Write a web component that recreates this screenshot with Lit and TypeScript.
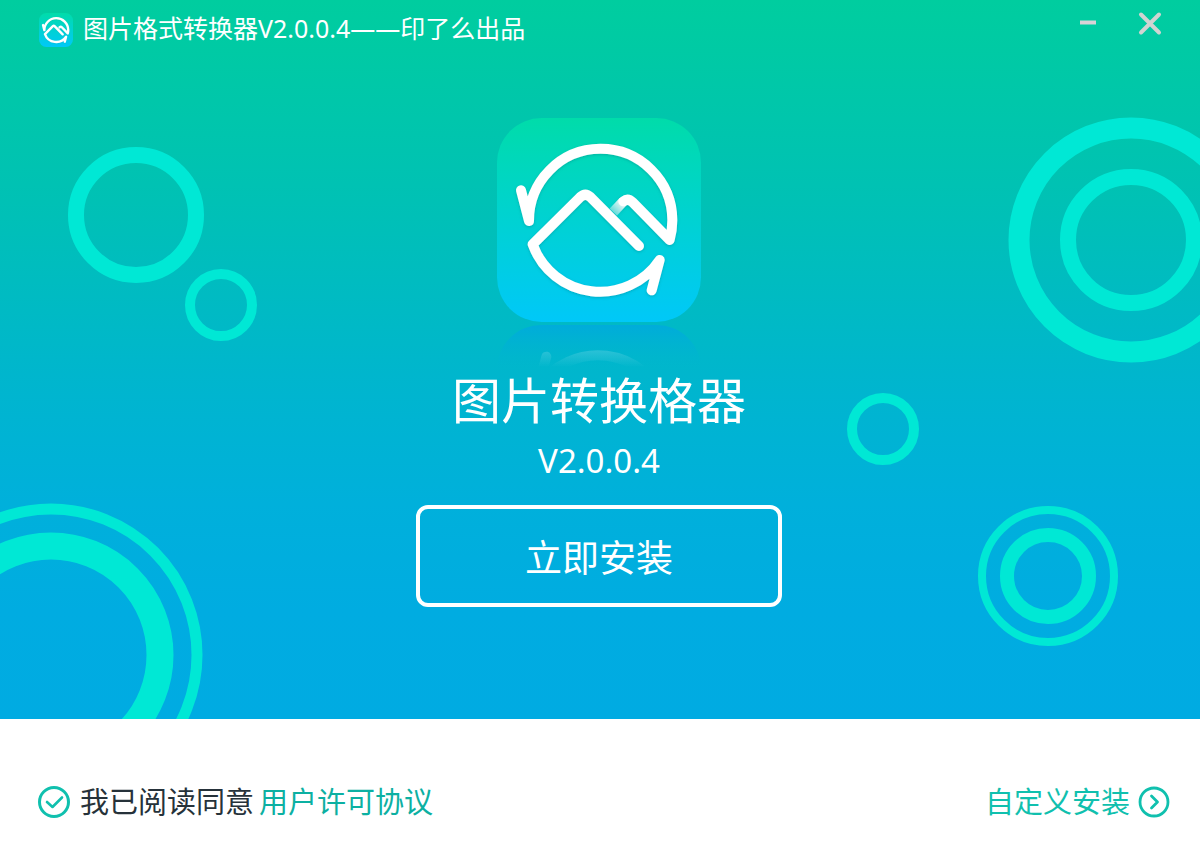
import { LitElement, css, html, svg } from "lit";
import { customElement, property, state } from "lit/decorators.js";

const LOGO_STROKES = svg`
  <path d="M430 304 L400 336" stroke="url(#fold)" stroke-linecap="butt"/>
  <path d="M123 271 L147 363 A215 215 0 0 1 577 360 Q577 392 569 420 L458 307 Q444 293 430 304"/>
  <path d="M477 438 L331 291 Q316 277 301 291 L158 433 A215 215 0 0 0 539 480 L515 571"/>
`;

@customElement("app-logo")
export class AppLogo extends LitElement {
  // Line weight in logo units; the small badge needs a heavier line.
  @property({ type: Number }) weight = 30;

  static styles = css`
    :host { display: block; }
    .mark { display: block; width: 100%; height: auto; }
  `;

  render() {
    return html`
      <svg class="mark" viewBox="51 54 612 612" aria-hidden="true">
        <defs>
          <linearGradient id="tile" x1="0" y1="0" x2="0" y2="1">
            <stop offset="0" stop-color="#00dcaa"/>
            <stop offset="0.5" stop-color="#00d2d2"/>
            <stop offset="1" stop-color="#00c8f8"/>
          </linearGradient>
          <linearGradient id="fold" gradientUnits="userSpaceOnUse" x1="432" y1="302" x2="398" y2="338">
            <stop offset="0" stop-color="#fff"/>
            <stop offset="1" stop-color="#fff" stop-opacity="0.3"/>
          </linearGradient>
          <filter id="shade" x="-10%" y="-10%" width="120%" height="120%">
            <feDropShadow dx="0" dy="3" stdDeviation="4" flood-color="#007a80" flood-opacity="0.4"/>
          </filter>
        </defs>
        <rect x="51" y="54" width="612" height="612" rx="134" fill="url(#tile)"/>
        <g fill="none" stroke="#fff" stroke-width=${this.weight} stroke-linecap="round"
           stroke-linejoin="round" filter="url(#shade)">${LOGO_STROKES}</g>
      </svg>
    `;
  }
}

@customElement("logo-reflection")
export class LogoReflection extends LitElement {
  static styles = css`
    :host { display: block; overflow: hidden; }
    .mark { display: block; width: 100%; height: auto; }
  `;

  render() {
    return html`
      <svg class="mark" viewBox="51 54 612 132" aria-hidden="true">
        <defs>
          <linearGradient id="fade" x1="0" y1="0" x2="0" y2="1">
            <stop offset="0" stop-color="#00a8e0" stop-opacity="0.8"/>
            <stop offset="1" stop-color="#00b4d2" stop-opacity="0"/>
          </linearGradient>
          <linearGradient id="line" gradientUnits="userSpaceOnUse" x1="0" y1="120" x2="0" y2="180">
            <stop offset="0" stop-color="#fff" stop-opacity="0.2"/>
            <stop offset="1" stop-color="#fff" stop-opacity="0"/>
          </linearGradient>
        </defs>
        <path d="M51 186 A134 132 0 0 1 185 54 H529 A134 132 0 0 1 663 186 Z" fill="url(#fade)"/>
        <g fill="none" stroke="url(#line)" stroke-width="30" stroke-linecap="round">
          <path d="M199 149 L175 240"/>
          <path d="M175 240 A215 215 0 0 1 556 287"/>
        </g>
      </svg>
    `;
  }
}

@customElement("app-root")
export class AppRoot extends LitElement {
  @state() private agreed = true;

  static styles = css`
    :host {
      display: flex;
      flex-direction: column;
      min-height: 100vh;
      background: #fff;
      font-family: "Noto Sans", "Noto Sans CJK SC", sans-serif;
    }
    button { border: 0; padding: 0; background: none; color: inherit; font: inherit; cursor: pointer; }
    .hero {
      position: relative;
      flex: 1;
      display: flex;
      flex-direction: column;
      overflow: hidden;
      color: #fff;
      background: linear-gradient(#00cd9f 0%, #00c1b5 28%, #00b6cd 52%, #00b0db 70%, #00ace1 85%, #00abe2 100%);
    }
    .rings { position: absolute; inset: 0; width: 100%; height: 100%; }
    .titlebar {
      position: relative;
      display: flex;
      align-items: center;
      justify-content: space-between;
      height: 60px;
      padding: 0 36px 0 39px;
    }
    .brand { display: flex; align-items: center; gap: 10px; }
    .badge { width: 34px; }
    .caption { margin: 0; padding-bottom: 4px; font-size: 25px; line-height: 36px; white-space: nowrap; }
    .controls { display: flex; gap: 34px; align-self: flex-start; padding-top: 10px; }
    .control { width: 28px; height: 28px; }
    .glyph { display: block; }
    .main {
      position: relative;
      flex: 1;
      display: flex;
      flex-direction: column;
      align-items: center;
      padding: 58px 26px 104px 24px;
    }
    .logo { width: 204px; }
    .reflection { width: 204px; margin-top: 3px; }
    .name { margin: 0; font-size: 49px; line-height: 62px; font-weight: 400; }
    .version { margin: 6px 0 0; font-size: 33px; line-height: 48px; }
    .install {
      box-sizing: border-box;
      width: 366px;
      max-width: 100%;
      height: 102px;
      margin-top: 20px;
      border: 4px solid #fff;
      border-radius: 12px;
      font-size: 37px;
    }
    .footer {
      display: flex;
      align-items: center;
      justify-content: space-between;
      height: 133px;
      padding: 32px 30px 0 38px;
      box-sizing: border-box;
      font-size: 29px;
      line-height: 40px;
      white-space: nowrap;
    }
    .terms { display: flex; align-items: center; gap: 5px; }
    .agree { display: flex; align-items: center; gap: 10px; color: #26323a; cursor: pointer; }
    .tick { display: grid; width: 32px; height: 32px; }
    .box {
      grid-area: 1 / 1;
      appearance: none;
      box-sizing: border-box;
      width: 32px;
      height: 32px;
      margin: 0;
      border: 3px solid #10c0ae;
      border-radius: 50%;
      cursor: pointer;
    }
    .check { grid-area: 1 / 1; pointer-events: none; visibility: hidden; }
    .box:checked + .check { visibility: visible; }
    .link { color: #0cb0a2; text-decoration: none; }
    .custom { display: flex; align-items: center; gap: 8px; color: #10c0ae; }
  `;

  private toggle(e: Event) {
    this.agreed = (e.target as HTMLInputElement).checked;
  }

  render() {
    return html`
      <section class="hero">
        <svg class="rings" viewBox="0 0 1200 719" preserveAspectRatio="xMidYMid slice"
             fill="none" stroke="#00e8d5" aria-hidden="true">
          <circle cx="136" cy="215" r="60" stroke-width="16"/>
          <circle cx="221" cy="305" r="31" stroke-width="10"/>
          <circle cx="883" cy="429" r="31" stroke-width="10"/>
          <circle cx="1131" cy="240" r="112" stroke-width="21"/>
          <circle cx="1131" cy="240" r="63" stroke-width="16"/>
          <circle cx="1048" cy="576" r="66" stroke-width="8"/>
          <circle cx="1048" cy="576" r="41" stroke-width="14"/>
          <circle cx="51" cy="655" r="146" stroke-width="11"/>
          <circle cx="51" cy="655" r="109" stroke-width="27"/>
        </svg>
        <header class="titlebar">
          <div class="brand">
            <app-logo class="badge" weight="42"></app-logo>
            <p class="caption">图片格式转换器V2.0.0.4——印了么出品</p>
          </div>
          <div class="controls">
            <button class="control" aria-label="最小化">
              <svg class="glyph" width="28" height="28" viewBox="0 0 28 28" stroke="#d9d2d6" stroke-width="4">
                <path d="M6 12.500H22"/>
              </svg>
            </button>
            <button class="control" aria-label="关闭">
              <svg class="glyph" width="28" height="28" viewBox="0 0 28 28" stroke="#d0d4d2" stroke-width="4" stroke-linecap="round">
                <path d="M5 4.500L23 22.500M23 4.500L5 22.500"/>
              </svg>
            </button>
          </div>
        </header>
        <main class="main">
          <app-logo class="logo"></app-logo>
          <logo-reflection class="reflection"></logo-reflection>
          <h1 class="name">图片转换格器</h1>
          <p class="version">V2.0.0.4</p>
          <button class="install" ?disabled=${!this.agreed}>立即安装</button>
        </main>
      </section>
      <footer class="footer">
        <div class="terms">
          <label class="agree">
            <span class="tick">
              <input class="box" type="checkbox" .checked=${this.agreed} @change=${this.toggle} />
              <svg class="check" width="32" height="32" viewBox="0 0 32 32" fill="none" stroke="#10c0ae"
                   stroke-width="2.600" stroke-linecap="round" stroke-linejoin="round">
                <path d="M9 16L14.500 21L24 11.500"/>
              </svg>
            </span>
            <span>我已阅读同意</span>
          </label>
          <a class="link" href="#license">用户许可协议</a>
        </div>
        <button class="custom">
          <span>自定义安装</span>
          <svg class="glyph" width="32" height="32" viewBox="0 0 32 32" fill="none" stroke="#10c0ae"
               stroke-width="2.800" stroke-linecap="round" stroke-linejoin="round" aria-hidden="true">
            <circle cx="16" cy="16" r="14"/>
            <path d="M13.500 10L19.500 16L13.500 22"/>
          </svg>
        </button>
      </footer>
    `;
  }
}
